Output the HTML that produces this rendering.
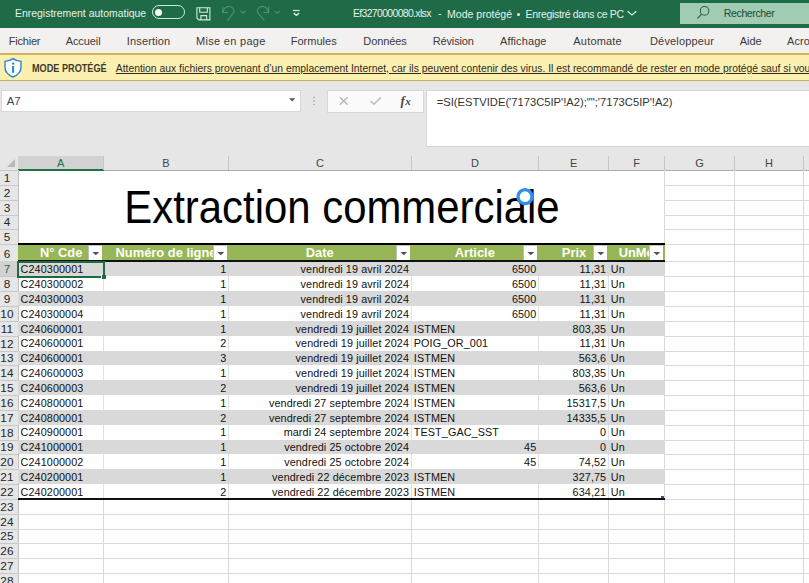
<!DOCTYPE html>
<html><head><meta charset="utf-8"><style>
html,body{margin:0;padding:0;width:809px;height:583px;overflow:hidden;background:#fff;}
.r{position:absolute;}
.t{position:absolute;white-space:nowrap;line-height:1;font-family:"Liberation Sans", sans-serif;}
</style></head><body>
<div class="r" style="left:0px;top:0px;width:809px;height:27.6px;background:#1f6a47;"></div>
<div class="t" style="left:15px;top:8.75px;font-size:10.45px;color:#e4f2ea;">Enregistrement automatique</div>
<div class="r" style="left:152px;top:5px;width:33.2px;height:14.2px;border:1.4px solid #c9ecd8;border-radius:8px;box-sizing:border-box;"></div>
<div class="r" style="left:155.3px;top:8.5px;width:7.2px;height:7.2px;background:#f4fbf7;border-radius:50%;"></div>
<svg class="r" style="left:0;top:0" width="809" height="27" viewBox="0 0 809 27">
<g fill="none" stroke="#cdeedc" stroke-width="1.1">
<path d="M196.9 7.8H209.9V19.9H198.9L196.9 17.9Z"/>
<path d="M199.7 7.8V12.2H207.3V7.8"/>
<path d="M200.9 19.9V15.6H206.6V19.9"/>
</g>
<g fill="none" stroke="#4f9571" stroke-width="1.05">
<path d="M222.8 7.2V12.4H228"/>
<path d="M223.2 12A5.4 5.4 0 0 1 234.2 11.8L227.5 20.6"/>
<path d="M240.5 10.7l2.6 2.5 2.6-2.5"/>
<path d="M268.6 6.8V12.4H263.4"/>
<path d="M268.2 12A5.4 5.4 0 0 0 257.2 11.8L264.3 20.6"/>
<path d="M274.7 11.1l2.6 2.1 2.6-2.1"/>
</g>
<g fill="none" stroke="#d2f0df">
<path d="M292.9 10.5h6.7" stroke-width="1.2"/>
<path d="M293.7 13.2l2.7 2.1 2.7-2.1" stroke-width="1.5"/>
<path d="M627.6 11.3l4.3 3.6 4.4-3.6" stroke-width="1.25"/>
</g>
</svg>
<div class="t" style="left:353px;top:8.75px;font-size:10.45px;color:#e4f2ea;letter-spacing:-0.65px;">Ef3270000080.xlsx</div>
<div class="t" style="left:438px;top:8.75px;font-size:10.45px;color:#e4f2ea;">-</div>
<div class="t" style="left:447px;top:8.67px;font-size:10.55px;color:#e4f2ea;">Mode protégé</div>
<div class="r" style="left:517px;top:12.5px;width:3px;height:3px;background:#e4f2ea;border-radius:50%"></div>
<div class="t" style="left:525.6px;top:8.71px;font-size:10.5px;color:#e4f2ea;letter-spacing:-0.33px;">Enregistré dans ce PC</div>
<div class="r" style="left:679.5px;top:2.5px;width:130px;height:21px;background:#a0ccb3;"></div>
<svg class="r" style="left:690px;top:0" width="30" height="27" viewBox="690 0 30 27">
<circle cx="704.6" cy="10.9" r="4.3" fill="none" stroke="#2c5a42" stroke-width="1.05"/>
<path d="M701.6 14.2L697.5 18.4" stroke="#2c5a42" stroke-width="1.15"/>
</svg>
<div class="t" style="left:723.8px;top:7.63px;font-size:10.6px;color:#1f4a33;letter-spacing:-0.42px;">Rechercher</div>
<div class="r" style="left:0px;top:27.6px;width:809px;height:26px;background:#f3f1f0;"></div>
<div class="t" style="left:8.8px;top:36.29px;font-size:11px;color:#3b3a39;letter-spacing:-0.22px;">Fichier</div>
<div class="t" style="left:65.7px;top:36.29px;font-size:11px;color:#3b3a39;letter-spacing:-0.08px;">Accueil</div>
<div class="t" style="left:126.8px;top:36.29px;font-size:11px;color:#3b3a39;letter-spacing:0.14px;">Insertion</div>
<div class="t" style="left:196px;top:36.29px;font-size:11px;color:#3b3a39;letter-spacing:0.3px;">Mise en page</div>
<div class="t" style="left:290.7px;top:36.29px;font-size:11px;color:#3b3a39;letter-spacing:0.02px;">Formules</div>
<div class="t" style="left:363.3px;top:36.29px;font-size:11px;color:#3b3a39;letter-spacing:-0.1px;">Données</div>
<div class="t" style="left:432.7px;top:36.29px;font-size:11px;color:#3b3a39;letter-spacing:-0.13px;">Révision</div>
<div class="t" style="left:500px;top:36.29px;font-size:11px;color:#3b3a39;letter-spacing:0.1px;">Affichage</div>
<div class="t" style="left:573.3px;top:36.29px;font-size:11px;color:#3b3a39;letter-spacing:0.19px;">Automate</div>
<div class="t" style="left:650px;top:36.29px;font-size:11px;color:#3b3a39;letter-spacing:0.16px;">Développeur</div>
<div class="t" style="left:739.7px;top:36.29px;font-size:11px;color:#3b3a39;letter-spacing:0px;">Aide</div>
<div class="t" style="left:787px;top:36.29px;font-size:11px;color:#3b3a39;letter-spacing:0.1px;">Acrobat</div>
<div class="r" style="left:0px;top:53.3px;width:809px;height:27.9px;background:#fcf0b1;border-top:2.2px solid #d3b655;border-bottom:1.6px solid #c8af5e;box-sizing:border-box;"></div>
<svg class="r" style="left:0;top:50px" width="30" height="32" viewBox="0 50 30 32">
<path d="M13 58.6 C10.8 60.3 8 61.2 5 61.4 V67.5 C5 72 8.2 75 13 77 C17.8 75 21 72 21 67.5 V61.4 C18 61.2 15.2 60.3 13 58.6 Z" fill="#fff" stroke="#2a86d6" stroke-width="1.4"/>
<circle cx="13.1" cy="63.6" r="1.2" fill="#1f86d8"/>
<rect x="12.1" y="66" width="2" height="6.7" fill="#1f86d8"/>
</svg>
<div class="t" style="left:31.7px;top:63.44px;font-size:10.7px;color:#3d3a2a;font-weight:bold;transform:scaleX(0.855);transform-origin:0 0;">MODE PROTÉGÉ</div>
<div class="t" style="left:115.8px;top:63.64px;font-size:10.35px;color:#2f2b1e;text-decoration:underline;white-space:nowrap;">Attention aux fichiers provenant d’un emplacement Internet, car ils peuvent contenir des virus. Il est recommandé de rester en mode protégé sauf si vous</div>
<div class="r" style="left:0px;top:81px;width:809px;height:75px;background:#e6e6e6;"></div>
<div class="r" style="left:1px;top:90px;width:300px;height:22px;background:#fff;border:1px solid #d8d8d8;box-sizing:border-box;"></div>
<div class="t" style="left:6.7px;top:95.75px;font-size:11.4px;color:#454545;">A7</div>
<svg class="r" style="left:280px;top:85px" width="150" height="30" viewBox="280 85 150 30">
<path d="M289 98.3h6.4l-3.2 3.2z" fill="#5a5a5a"/>
<circle cx="314" cy="97.5" r="0.8" fill="#9a9a9a"/><circle cx="314" cy="101" r="0.8" fill="#9a9a9a"/><circle cx="314" cy="104.5" r="0.8" fill="#9a9a9a"/>
</svg>
<div class="r" style="left:327px;top:89.5px;width:96.5px;height:23px;background:#fbfbfb;border:1px solid #d6d6d6;box-sizing:border-box;"></div>
<svg class="r" style="left:320px;top:85px" width="110" height="30" viewBox="320 85 110 30">
<path d="M339.8 97.3l7.8 7.4M347.6 97.3l-7.8 7.4" stroke="#b4b4b4" stroke-width="1.25" fill="none"/>
<path d="M370.4 101.1l3.7 3.1 6.7-6.8" stroke="#c2c2c2" stroke-width="1.7" fill="none"/>
</svg>
<div class="t" style="left:400.5px;top:94px;font-family:'Liberation Serif',serif;font-style:italic;font-weight:bold;color:#4a4a4a;font-size:13px;line-height:1">f<span style="font-size:11px;margin-left:0.5px">x</span></div>
<div class="r" style="left:426px;top:90px;width:385px;height:57px;background:#fff;border:1px solid #d6d6d6;box-sizing:border-box;"></div>
<div class="t" style="left:436.7px;top:96.52px;font-size:11.2px;color:#333;">=SI(ESTVIDE('7173C5IP'!A2);"";'7173C5IP'!A2)</div>
<div class="r" style="left:0px;top:156px;width:809px;height:14.5px;background:#e6e6e6;"></div>
<div class="r" style="left:18px;top:156px;width:86px;height:14.5px;background:#d2d2d2;"></div>
<div class="r" style="left:0px;top:169.5px;width:809px;height:1px;background:#ababab;"></div>
<div class="r" style="left:18px;top:168.5px;width:86px;height:2px;background:#217346;"></div>
<svg class="r" style="left:0;top:155px" width="18" height="16" viewBox="0 155 18 16"><path d="M15 159v8h-8z" fill="#b9b9b9"/></svg>
<div class="t" style="left:-139.25px;width:400px;text-align:center;top:157.99px;font-size:11px;color:#217346;">A</div>
<div class="r" style="left:103.0px;top:156px;width:1px;height:14px;background:#c6c6c6;"></div>
<div class="t" style="left:-34.0px;width:400px;text-align:center;top:157.99px;font-size:11px;color:#444;">B</div>
<div class="r" style="left:228.0px;top:156px;width:1px;height:14px;background:#c6c6c6;"></div>
<div class="t" style="left:119.94999999999999px;width:400px;text-align:center;top:157.99px;font-size:11px;color:#444;">C</div>
<div class="r" style="left:410.9px;top:156px;width:1px;height:14px;background:#c6c6c6;"></div>
<div class="t" style="left:274.95px;width:400px;text-align:center;top:157.99px;font-size:11px;color:#444;">D</div>
<div class="r" style="left:538.0px;top:156px;width:1px;height:14px;background:#c6c6c6;"></div>
<div class="t" style="left:373.54999999999995px;width:400px;text-align:center;top:157.99px;font-size:11px;color:#444;">E</div>
<div class="r" style="left:608.1px;top:156px;width:1px;height:14px;background:#c6c6c6;"></div>
<div class="t" style="left:436.54999999999995px;width:400px;text-align:center;top:157.99px;font-size:11px;color:#444;">F</div>
<div class="r" style="left:664.0px;top:156px;width:1px;height:14px;background:#c6c6c6;"></div>
<div class="t" style="left:499.5px;width:400px;text-align:center;top:157.99px;font-size:11px;color:#444;">G</div>
<div class="r" style="left:734.0px;top:156px;width:1px;height:14px;background:#c6c6c6;"></div>
<div class="t" style="left:569.05px;width:400px;text-align:center;top:157.99px;font-size:11px;color:#444;">H</div>
<div class="r" style="left:803.1px;top:156px;width:1px;height:14px;background:#c6c6c6;"></div>
<div class="t" style="left:641.8px;width:400px;text-align:center;top:157.99px;font-size:11px;color:#444;">I</div>
<div class="r" style="left:0px;top:170px;width:18px;height:413px;background:#e6e6e6;"></div>
<div class="r" style="left:17.5px;top:170px;width:1px;height:413px;background:#c0c0c0;"></div>
<div class="r" style="left:18.5px;top:170.5px;width:791px;height:413px;background:#fff;"></div>
<div class="r" style="left:0px;top:169.5px;width:18px;height:1px;background:#c8c8c8;"></div>
<div class="r" style="left:664.5px;top:184.5px;width:144.5px;height:1px;background:#dadada;"></div>
<div class="r" style="left:0px;top:184.5px;width:18px;height:1px;background:#c8c8c8;"></div>
<div class="r" style="left:664.5px;top:199.5px;width:144.5px;height:1px;background:#dadada;"></div>
<div class="r" style="left:0px;top:199.5px;width:18px;height:1px;background:#c8c8c8;"></div>
<div class="r" style="left:664.5px;top:214.5px;width:144.5px;height:1px;background:#dadada;"></div>
<div class="r" style="left:0px;top:214.5px;width:18px;height:1px;background:#c8c8c8;"></div>
<div class="r" style="left:664.5px;top:228.5px;width:144.5px;height:1px;background:#dadada;"></div>
<div class="r" style="left:0px;top:228.5px;width:18px;height:1px;background:#c8c8c8;"></div>
<div class="r" style="left:664.5px;top:243.5px;width:144.5px;height:1px;background:#dadada;"></div>
<div class="r" style="left:0px;top:243.5px;width:18px;height:1px;background:#c8c8c8;"></div>
<div class="r" style="left:664.5px;top:260.5px;width:144.5px;height:1px;background:#dadada;"></div>
<div class="r" style="left:0px;top:260.5px;width:18px;height:1px;background:#c8c8c8;"></div>
<div class="r" style="left:664.5px;top:275.5px;width:144.5px;height:1px;background:#dadada;"></div>
<div class="r" style="left:0px;top:275.5px;width:18px;height:1px;background:#c8c8c8;"></div>
<div class="r" style="left:664.5px;top:290.5px;width:144.5px;height:1px;background:#dadada;"></div>
<div class="r" style="left:0px;top:290.5px;width:18px;height:1px;background:#c8c8c8;"></div>
<div class="r" style="left:664.5px;top:305.5px;width:144.5px;height:1px;background:#dadada;"></div>
<div class="r" style="left:0px;top:305.5px;width:18px;height:1px;background:#c8c8c8;"></div>
<div class="r" style="left:664.5px;top:320.5px;width:144.5px;height:1px;background:#dadada;"></div>
<div class="r" style="left:0px;top:320.5px;width:18px;height:1px;background:#c8c8c8;"></div>
<div class="r" style="left:664.5px;top:335.5px;width:144.5px;height:1px;background:#dadada;"></div>
<div class="r" style="left:0px;top:335.5px;width:18px;height:1px;background:#c8c8c8;"></div>
<div class="r" style="left:664.5px;top:350.5px;width:144.5px;height:1px;background:#dadada;"></div>
<div class="r" style="left:0px;top:350.5px;width:18px;height:1px;background:#c8c8c8;"></div>
<div class="r" style="left:664.5px;top:364.5px;width:144.5px;height:1px;background:#dadada;"></div>
<div class="r" style="left:0px;top:364.5px;width:18px;height:1px;background:#c8c8c8;"></div>
<div class="r" style="left:664.5px;top:379.5px;width:144.5px;height:1px;background:#dadada;"></div>
<div class="r" style="left:0px;top:379.5px;width:18px;height:1px;background:#c8c8c8;"></div>
<div class="r" style="left:664.5px;top:394.5px;width:144.5px;height:1px;background:#dadada;"></div>
<div class="r" style="left:0px;top:394.5px;width:18px;height:1px;background:#c8c8c8;"></div>
<div class="r" style="left:664.5px;top:409.5px;width:144.5px;height:1px;background:#dadada;"></div>
<div class="r" style="left:0px;top:409.5px;width:18px;height:1px;background:#c8c8c8;"></div>
<div class="r" style="left:664.5px;top:424.5px;width:144.5px;height:1px;background:#dadada;"></div>
<div class="r" style="left:0px;top:424.5px;width:18px;height:1px;background:#c8c8c8;"></div>
<div class="r" style="left:664.5px;top:439.5px;width:144.5px;height:1px;background:#dadada;"></div>
<div class="r" style="left:0px;top:439.5px;width:18px;height:1px;background:#c8c8c8;"></div>
<div class="r" style="left:664.5px;top:453.5px;width:144.5px;height:1px;background:#dadada;"></div>
<div class="r" style="left:0px;top:453.5px;width:18px;height:1px;background:#c8c8c8;"></div>
<div class="r" style="left:664.5px;top:468.5px;width:144.5px;height:1px;background:#dadada;"></div>
<div class="r" style="left:0px;top:468.5px;width:18px;height:1px;background:#c8c8c8;"></div>
<div class="r" style="left:664.5px;top:483.5px;width:144.5px;height:1px;background:#dadada;"></div>
<div class="r" style="left:0px;top:483.5px;width:18px;height:1px;background:#c8c8c8;"></div>
<div class="r" style="left:664.5px;top:498.5px;width:144.5px;height:1px;background:#dadada;"></div>
<div class="r" style="left:0px;top:498.5px;width:18px;height:1px;background:#c8c8c8;"></div>
<div class="r" style="left:18px;top:513.5px;width:791px;height:1px;background:#dadada;"></div>
<div class="r" style="left:0px;top:513.5px;width:18px;height:1px;background:#c8c8c8;"></div>
<div class="r" style="left:18px;top:528.5px;width:791px;height:1px;background:#dadada;"></div>
<div class="r" style="left:0px;top:528.5px;width:18px;height:1px;background:#c8c8c8;"></div>
<div class="r" style="left:18px;top:542.5px;width:791px;height:1px;background:#dadada;"></div>
<div class="r" style="left:0px;top:542.5px;width:18px;height:1px;background:#c8c8c8;"></div>
<div class="r" style="left:18px;top:557.5px;width:791px;height:1px;background:#dadada;"></div>
<div class="r" style="left:0px;top:557.5px;width:18px;height:1px;background:#c8c8c8;"></div>
<div class="r" style="left:18px;top:572.5px;width:791px;height:1px;background:#dadada;"></div>
<div class="r" style="left:0px;top:572.5px;width:18px;height:1px;background:#c8c8c8;"></div>
<div class="r" style="left:18px;top:587.5px;width:791px;height:1px;background:#dadada;"></div>
<div class="r" style="left:0px;top:587.5px;width:18px;height:1px;background:#c8c8c8;"></div>
<div class="r" style="left:18px;top:602.5px;width:791px;height:1px;background:#dadada;"></div>
<div class="r" style="left:664.0px;top:170px;width:1px;height:413px;background:#dadada;"></div>
<div class="r" style="left:734.0px;top:170px;width:1px;height:413px;background:#dadada;"></div>
<div class="r" style="left:803.1px;top:170px;width:1px;height:413px;background:#dadada;"></div>
<div class="r" style="left:103.0px;top:498px;width:1px;height:90px;background:#dadada;"></div>
<div class="r" style="left:228.0px;top:498px;width:1px;height:90px;background:#dadada;"></div>
<div class="r" style="left:410.9px;top:498px;width:1px;height:90px;background:#dadada;"></div>
<div class="r" style="left:538.0px;top:498px;width:1px;height:90px;background:#dadada;"></div>
<div class="r" style="left:608.1px;top:498px;width:1px;height:90px;background:#dadada;"></div>
<div class="t" style="left:-193.1px;width:400px;text-align:center;top:172.87px;font-size:11.8px;color:#262626;">1</div>
<div class="t" style="left:-193.1px;width:400px;text-align:center;top:187.73px;font-size:11.8px;color:#262626;">2</div>
<div class="t" style="left:-193.1px;width:400px;text-align:center;top:202.59px;font-size:11.8px;color:#262626;">3</div>
<div class="t" style="left:-193.1px;width:400px;text-align:center;top:217.45px;font-size:11.8px;color:#262626;">4</div>
<div class="t" style="left:-193.1px;width:400px;text-align:center;top:232.31px;font-size:11.8px;color:#262626;">5</div>
<div class="t" style="left:-193.1px;width:400px;text-align:center;top:249.31px;font-size:11.8px;color:#262626;">6</div>
<div class="r" style="left:0px;top:261px;width:17.5px;height:15px;background:#d2d2d2;"></div>
<div class="t" style="left:-193.1px;width:400px;text-align:center;top:264.41px;font-size:11.8px;color:#217346;">7</div>
<div class="t" style="left:-193.1px;width:400px;text-align:center;top:279.24px;font-size:11.8px;color:#262626;">8</div>
<div class="t" style="left:-193.1px;width:400px;text-align:center;top:294.07px;font-size:11.8px;color:#262626;">9</div>
<div class="t" style="left:-193.1px;width:400px;text-align:center;top:308.90px;font-size:11.8px;color:#262626;">10</div>
<div class="t" style="left:-193.1px;width:400px;text-align:center;top:323.73px;font-size:11.8px;color:#262626;">11</div>
<div class="t" style="left:-193.1px;width:400px;text-align:center;top:338.56px;font-size:11.8px;color:#262626;">12</div>
<div class="t" style="left:-193.1px;width:400px;text-align:center;top:353.39px;font-size:11.8px;color:#262626;">13</div>
<div class="t" style="left:-193.1px;width:400px;text-align:center;top:368.22px;font-size:11.8px;color:#262626;">14</div>
<div class="t" style="left:-193.1px;width:400px;text-align:center;top:383.05px;font-size:11.8px;color:#262626;">15</div>
<div class="t" style="left:-193.1px;width:400px;text-align:center;top:397.88px;font-size:11.8px;color:#262626;">16</div>
<div class="t" style="left:-193.1px;width:400px;text-align:center;top:412.71px;font-size:11.8px;color:#262626;">17</div>
<div class="t" style="left:-193.1px;width:400px;text-align:center;top:427.54px;font-size:11.8px;color:#262626;">18</div>
<div class="t" style="left:-193.1px;width:400px;text-align:center;top:442.37px;font-size:11.8px;color:#262626;">19</div>
<div class="t" style="left:-193.1px;width:400px;text-align:center;top:457.20px;font-size:11.8px;color:#262626;">20</div>
<div class="t" style="left:-193.1px;width:400px;text-align:center;top:472.03px;font-size:11.8px;color:#262626;">21</div>
<div class="t" style="left:-193.1px;width:400px;text-align:center;top:486.86px;font-size:11.8px;color:#262626;">22</div>
<div class="t" style="left:-193.1px;width:400px;text-align:center;top:501.69px;font-size:11.8px;color:#262626;">23</div>
<div class="t" style="left:-193.1px;width:400px;text-align:center;top:516.52px;font-size:11.8px;color:#262626;">24</div>
<div class="t" style="left:-193.1px;width:400px;text-align:center;top:531.35px;font-size:11.8px;color:#262626;">25</div>
<div class="t" style="left:-193.1px;width:400px;text-align:center;top:546.18px;font-size:11.8px;color:#262626;">26</div>
<div class="t" style="left:-193.1px;width:400px;text-align:center;top:561.01px;font-size:11.8px;color:#262626;">27</div>
<div class="t" style="left:-193.1px;width:400px;text-align:center;top:575.84px;font-size:11.8px;color:#262626;">28</div>
<div class="t" style="left:142px;width:400px;text-align:center;top:188.33px;font-size:41.9px;color:#000;transform:scaleY(1.1);transform-origin:0 35.47px;width:800px;left:-58px;">Extraction commerciale</div>
<div class="r" style="left:18px;top:243px;width:647px;height:2px;background:#000;"></div>
<div class="r" style="left:18px;top:245px;width:647px;height:16px;background:#97b657;"></div>
<div class="r" style="left:18px;top:245px;width:69.6px;height:16px;overflow:hidden">
<div class="t" style="left:-56.9px;width:200px;text-align:center;top:2.48px;font-size:12.9px;font-weight:bold;color:#fdfdf5;transform:scaleY(1.06);transform-origin:0 10.9px">N° Cde</div>
</div>
<div class="r" style="left:103.5px;top:245px;width:109.1px;height:16px;overflow:hidden">
<div class="t" style="left:-37.5px;width:200px;text-align:center;top:2.48px;font-size:12.9px;font-weight:bold;color:#fdfdf5;transform:scaleY(1.06);transform-origin:0 10.9px">Numéro de ligne</div>
</div>
<div class="r" style="left:228.5px;top:245px;width:167.0px;height:16px;overflow:hidden">
<div class="t" style="left:-8.800000000000011px;width:200px;text-align:center;top:2.48px;font-size:12.9px;font-weight:bold;color:#fdfdf5;transform:scaleY(1.06);transform-origin:0 10.9px">Date</div>
</div>
<div class="r" style="left:411.4px;top:245px;width:111.20000000000005px;height:16px;overflow:hidden">
<div class="t" style="left:-36.599999999999966px;width:200px;text-align:center;top:2.48px;font-size:12.9px;font-weight:bold;color:#fdfdf5;transform:scaleY(1.06);transform-origin:0 10.9px">Article</div>
</div>
<div class="r" style="left:538.5px;top:245px;width:54.200000000000045px;height:16px;overflow:hidden">
<div class="t" style="left:-64.5px;width:200px;text-align:center;top:2.48px;font-size:12.9px;font-weight:bold;color:#fdfdf5;transform:scaleY(1.06);transform-origin:0 10.9px">Prix</div>
</div>
<div class="r" style="left:608.6px;top:245px;width:40.0px;height:16px;overflow:hidden">
<div class="t" style="left:10.100000000000023px;top:2.48px;font-size:12.9px;font-weight:bold;color:#fff;transform:scaleY(1.06);transform-origin:0 10.9px">UnMesure</div>
</div>
<div class="r" style="left:87.6px;top:245px;width:14.4px;height:15.1px;background:#fff;border-left:1px solid #b9bec3;border-top:1.6px solid #bfc4ca;box-sizing:border-box;"></div>
<svg class="r" style="left:87.6px;top:245px" width="15" height="15" viewBox="0 0 15 15"><path d="M4.4 7h6.8l-3.4 3.3z" fill="#505050"/></svg>
<div class="r" style="left:212.6px;top:245px;width:14.4px;height:15.1px;background:#fff;border-left:1px solid #b9bec3;border-top:1.6px solid #bfc4ca;box-sizing:border-box;"></div>
<svg class="r" style="left:212.6px;top:245px" width="15" height="15" viewBox="0 0 15 15"><path d="M4.4 7h6.8l-3.4 3.3z" fill="#505050"/></svg>
<div class="r" style="left:395.5px;top:245px;width:14.4px;height:15.1px;background:#fff;border-left:1px solid #b9bec3;border-top:1.6px solid #bfc4ca;box-sizing:border-box;"></div>
<svg class="r" style="left:395.5px;top:245px" width="15" height="15" viewBox="0 0 15 15"><path d="M4.4 7h6.8l-3.4 3.3z" fill="#505050"/></svg>
<div class="r" style="left:522.6px;top:245px;width:14.4px;height:15.1px;background:#fff;border-left:1px solid #b9bec3;border-top:1.6px solid #bfc4ca;box-sizing:border-box;"></div>
<svg class="r" style="left:522.6px;top:245px" width="15" height="15" viewBox="0 0 15 15"><path d="M4.4 7h6.8l-3.4 3.3z" fill="#505050"/></svg>
<div class="r" style="left:592.7px;top:245px;width:14.4px;height:15.1px;background:#fff;border-left:1px solid #b9bec3;border-top:1.6px solid #bfc4ca;box-sizing:border-box;"></div>
<svg class="r" style="left:592.7px;top:245px" width="15" height="15" viewBox="0 0 15 15"><path d="M4.4 7h6.8l-3.4 3.3z" fill="#505050"/></svg>
<div class="r" style="left:648.6px;top:245px;width:14.4px;height:15.1px;background:#fff;border-left:1px solid #b9bec3;border-top:1.6px solid #bfc4ca;box-sizing:border-box;"></div>
<svg class="r" style="left:648.6px;top:245px" width="15" height="15" viewBox="0 0 15 15"><path d="M4.4 7h6.8l-3.4 3.3z" fill="#505050"/></svg>
<div class="r" style="left:18px;top:261px;width:646.5px;height:15px;background:#d9d9d9;"></div>
<div class="t" style="left:20.6px;top:264.26px;font-size:10.8px;color:#111;letter-spacing:0.1px;transform:scaleY(1.07);transform-origin:0 9.14px;">C240300001</div>
<div class="t" style="right:582.7px;top:264.26px;font-size:10.8px;color:#111;letter-spacing:0.1px;transform:scaleY(1.07);transform-origin:0 9.14px;">1</div>
<div class="t" style="right:400.0px;top:264.26px;font-size:10.8px;color:#111;letter-spacing:0.1px;transform:scaleY(1.07);transform-origin:0 9.14px;">vendredi 19 avril 2024</div>
<div class="t" style="right:272.70000000000005px;top:264.26px;font-size:10.8px;color:#111;letter-spacing:0.1px;transform:scaleY(1.07);transform-origin:0 9.14px;">6500</div>
<div class="t" style="right:202.79999999999995px;top:264.26px;font-size:10.8px;color:#111;letter-spacing:0.1px;transform:scaleY(1.07);transform-origin:0 9.14px;">11,31</div>
<div class="t" style="left:610.8000000000001px;top:264.26px;font-size:10.8px;color:#111;letter-spacing:0.1px;transform:scaleY(1.07);transform-origin:0 9.14px;">Un</div>
<div class="r" style="left:18px;top:290.5px;width:646.5px;height:1px;background:#ececec;"></div>
<div class="r" style="left:103.0px;top:276px;width:1px;height:15px;background:#e2e2e2;"></div>
<div class="r" style="left:228.0px;top:276px;width:1px;height:15px;background:#e2e2e2;"></div>
<div class="r" style="left:410.9px;top:276px;width:1px;height:15px;background:#e2e2e2;"></div>
<div class="r" style="left:538.0px;top:276px;width:1px;height:15px;background:#e2e2e2;"></div>
<div class="r" style="left:608.1px;top:276px;width:1px;height:15px;background:#e2e2e2;"></div>
<div class="t" style="left:20.6px;top:279.09px;font-size:10.8px;color:#111;letter-spacing:0.1px;transform:scaleY(1.07);transform-origin:0 9.14px;">C240300002</div>
<div class="t" style="right:582.7px;top:279.09px;font-size:10.8px;color:#111;letter-spacing:0.1px;transform:scaleY(1.07);transform-origin:0 9.14px;">1</div>
<div class="t" style="right:400.0px;top:279.09px;font-size:10.8px;color:#111;letter-spacing:0.1px;transform:scaleY(1.07);transform-origin:0 9.14px;">vendredi 19 avril 2024</div>
<div class="t" style="right:272.70000000000005px;top:279.09px;font-size:10.8px;color:#111;letter-spacing:0.1px;transform:scaleY(1.07);transform-origin:0 9.14px;">6500</div>
<div class="t" style="right:202.79999999999995px;top:279.09px;font-size:10.8px;color:#111;letter-spacing:0.1px;transform:scaleY(1.07);transform-origin:0 9.14px;">11,31</div>
<div class="t" style="left:610.8000000000001px;top:279.09px;font-size:10.8px;color:#111;letter-spacing:0.1px;transform:scaleY(1.07);transform-origin:0 9.14px;">Un</div>
<div class="r" style="left:18px;top:291px;width:646.5px;height:15px;background:#d9d9d9;"></div>
<div class="t" style="left:20.6px;top:293.92px;font-size:10.8px;color:#111;letter-spacing:0.1px;transform:scaleY(1.07);transform-origin:0 9.14px;">C240300003</div>
<div class="t" style="right:582.7px;top:293.92px;font-size:10.8px;color:#111;letter-spacing:0.1px;transform:scaleY(1.07);transform-origin:0 9.14px;">1</div>
<div class="t" style="right:400.0px;top:293.92px;font-size:10.8px;color:#111;letter-spacing:0.1px;transform:scaleY(1.07);transform-origin:0 9.14px;">vendredi 19 avril 2024</div>
<div class="t" style="right:272.70000000000005px;top:293.92px;font-size:10.8px;color:#111;letter-spacing:0.1px;transform:scaleY(1.07);transform-origin:0 9.14px;">6500</div>
<div class="t" style="right:202.79999999999995px;top:293.92px;font-size:10.8px;color:#111;letter-spacing:0.1px;transform:scaleY(1.07);transform-origin:0 9.14px;">11,31</div>
<div class="t" style="left:610.8000000000001px;top:293.92px;font-size:10.8px;color:#111;letter-spacing:0.1px;transform:scaleY(1.07);transform-origin:0 9.14px;">Un</div>
<div class="r" style="left:18px;top:320.5px;width:646.5px;height:1px;background:#ececec;"></div>
<div class="r" style="left:103.0px;top:306px;width:1px;height:15px;background:#e2e2e2;"></div>
<div class="r" style="left:228.0px;top:306px;width:1px;height:15px;background:#e2e2e2;"></div>
<div class="r" style="left:410.9px;top:306px;width:1px;height:15px;background:#e2e2e2;"></div>
<div class="r" style="left:538.0px;top:306px;width:1px;height:15px;background:#e2e2e2;"></div>
<div class="r" style="left:608.1px;top:306px;width:1px;height:15px;background:#e2e2e2;"></div>
<div class="t" style="left:20.6px;top:308.75px;font-size:10.8px;color:#111;letter-spacing:0.1px;transform:scaleY(1.07);transform-origin:0 9.14px;">C240300004</div>
<div class="t" style="right:582.7px;top:308.75px;font-size:10.8px;color:#111;letter-spacing:0.1px;transform:scaleY(1.07);transform-origin:0 9.14px;">1</div>
<div class="t" style="right:400.0px;top:308.75px;font-size:10.8px;color:#111;letter-spacing:0.1px;transform:scaleY(1.07);transform-origin:0 9.14px;">vendredi 19 avril 2024</div>
<div class="t" style="right:272.70000000000005px;top:308.75px;font-size:10.8px;color:#111;letter-spacing:0.1px;transform:scaleY(1.07);transform-origin:0 9.14px;">6500</div>
<div class="t" style="right:202.79999999999995px;top:308.75px;font-size:10.8px;color:#111;letter-spacing:0.1px;transform:scaleY(1.07);transform-origin:0 9.14px;">11,31</div>
<div class="t" style="left:610.8000000000001px;top:308.75px;font-size:10.8px;color:#111;letter-spacing:0.1px;transform:scaleY(1.07);transform-origin:0 9.14px;">Un</div>
<div class="r" style="left:18px;top:321px;width:646.5px;height:15px;background:#d9d9d9;"></div>
<div class="t" style="left:20.6px;top:323.58px;font-size:10.8px;color:#111;letter-spacing:0.1px;transform:scaleY(1.07);transform-origin:0 9.14px;">C240600001</div>
<div class="t" style="right:582.7px;top:323.58px;font-size:10.8px;color:#111;letter-spacing:0.1px;transform:scaleY(1.07);transform-origin:0 9.14px;">1</div>
<div class="t" style="right:400.0px;top:323.58px;font-size:10.8px;color:#111;letter-spacing:0.1px;transform:scaleY(1.07);transform-origin:0 9.14px;">vendredi 19 juillet 2024</div>
<div class="t" style="left:413.79999999999995px;top:323.58px;font-size:10.8px;color:#111;letter-spacing:0.1px;transform:scaleY(1.07);transform-origin:0 9.14px;">ISTMEN</div>
<div class="t" style="right:202.79999999999995px;top:323.58px;font-size:10.8px;color:#111;letter-spacing:0.1px;transform:scaleY(1.07);transform-origin:0 9.14px;">803,35</div>
<div class="t" style="left:610.8000000000001px;top:323.58px;font-size:10.8px;color:#111;letter-spacing:0.1px;transform:scaleY(1.07);transform-origin:0 9.14px;">Un</div>
<div class="r" style="left:18px;top:350.5px;width:646.5px;height:1px;background:#ececec;"></div>
<div class="r" style="left:103.0px;top:336px;width:1px;height:15px;background:#e2e2e2;"></div>
<div class="r" style="left:228.0px;top:336px;width:1px;height:15px;background:#e2e2e2;"></div>
<div class="r" style="left:410.9px;top:336px;width:1px;height:15px;background:#e2e2e2;"></div>
<div class="r" style="left:538.0px;top:336px;width:1px;height:15px;background:#e2e2e2;"></div>
<div class="r" style="left:608.1px;top:336px;width:1px;height:15px;background:#e2e2e2;"></div>
<div class="t" style="left:20.6px;top:338.41px;font-size:10.8px;color:#111;letter-spacing:0.1px;transform:scaleY(1.07);transform-origin:0 9.14px;">C240600001</div>
<div class="t" style="right:582.7px;top:338.41px;font-size:10.8px;color:#111;letter-spacing:0.1px;transform:scaleY(1.07);transform-origin:0 9.14px;">2</div>
<div class="t" style="right:400.0px;top:338.41px;font-size:10.8px;color:#111;letter-spacing:0.1px;transform:scaleY(1.07);transform-origin:0 9.14px;">vendredi 19 juillet 2024</div>
<div class="t" style="left:413.79999999999995px;top:338.41px;font-size:10.8px;color:#111;letter-spacing:0.1px;transform:scaleY(1.07);transform-origin:0 9.14px;">POIG_OR_001</div>
<div class="t" style="right:202.79999999999995px;top:338.41px;font-size:10.8px;color:#111;letter-spacing:0.1px;transform:scaleY(1.07);transform-origin:0 9.14px;">11,31</div>
<div class="t" style="left:610.8000000000001px;top:338.41px;font-size:10.8px;color:#111;letter-spacing:0.1px;transform:scaleY(1.07);transform-origin:0 9.14px;">Un</div>
<div class="r" style="left:18px;top:351px;width:646.5px;height:14px;background:#d9d9d9;"></div>
<div class="t" style="left:20.6px;top:353.24px;font-size:10.8px;color:#111;letter-spacing:0.1px;transform:scaleY(1.07);transform-origin:0 9.14px;">C240600001</div>
<div class="t" style="right:582.7px;top:353.24px;font-size:10.8px;color:#111;letter-spacing:0.1px;transform:scaleY(1.07);transform-origin:0 9.14px;">3</div>
<div class="t" style="right:400.0px;top:353.24px;font-size:10.8px;color:#111;letter-spacing:0.1px;transform:scaleY(1.07);transform-origin:0 9.14px;">vendredi 19 juillet 2024</div>
<div class="t" style="left:413.79999999999995px;top:353.24px;font-size:10.8px;color:#111;letter-spacing:0.1px;transform:scaleY(1.07);transform-origin:0 9.14px;">ISTMEN</div>
<div class="t" style="right:202.79999999999995px;top:353.24px;font-size:10.8px;color:#111;letter-spacing:0.1px;transform:scaleY(1.07);transform-origin:0 9.14px;">563,6</div>
<div class="t" style="left:610.8000000000001px;top:353.24px;font-size:10.8px;color:#111;letter-spacing:0.1px;transform:scaleY(1.07);transform-origin:0 9.14px;">Un</div>
<div class="r" style="left:18px;top:379.5px;width:646.5px;height:1px;background:#ececec;"></div>
<div class="r" style="left:103.0px;top:365px;width:1px;height:15px;background:#e2e2e2;"></div>
<div class="r" style="left:228.0px;top:365px;width:1px;height:15px;background:#e2e2e2;"></div>
<div class="r" style="left:410.9px;top:365px;width:1px;height:15px;background:#e2e2e2;"></div>
<div class="r" style="left:538.0px;top:365px;width:1px;height:15px;background:#e2e2e2;"></div>
<div class="r" style="left:608.1px;top:365px;width:1px;height:15px;background:#e2e2e2;"></div>
<div class="t" style="left:20.6px;top:368.07px;font-size:10.8px;color:#111;letter-spacing:0.1px;transform:scaleY(1.07);transform-origin:0 9.14px;">C240600003</div>
<div class="t" style="right:582.7px;top:368.07px;font-size:10.8px;color:#111;letter-spacing:0.1px;transform:scaleY(1.07);transform-origin:0 9.14px;">1</div>
<div class="t" style="right:400.0px;top:368.07px;font-size:10.8px;color:#111;letter-spacing:0.1px;transform:scaleY(1.07);transform-origin:0 9.14px;">vendredi 19 juillet 2024</div>
<div class="t" style="left:413.79999999999995px;top:368.07px;font-size:10.8px;color:#111;letter-spacing:0.1px;transform:scaleY(1.07);transform-origin:0 9.14px;">ISTMEN</div>
<div class="t" style="right:202.79999999999995px;top:368.07px;font-size:10.8px;color:#111;letter-spacing:0.1px;transform:scaleY(1.07);transform-origin:0 9.14px;">803,35</div>
<div class="t" style="left:610.8000000000001px;top:368.07px;font-size:10.8px;color:#111;letter-spacing:0.1px;transform:scaleY(1.07);transform-origin:0 9.14px;">Un</div>
<div class="r" style="left:18px;top:380px;width:646.5px;height:15px;background:#d9d9d9;"></div>
<div class="t" style="left:20.6px;top:382.90px;font-size:10.8px;color:#111;letter-spacing:0.1px;transform:scaleY(1.07);transform-origin:0 9.14px;">C240600003</div>
<div class="t" style="right:582.7px;top:382.90px;font-size:10.8px;color:#111;letter-spacing:0.1px;transform:scaleY(1.07);transform-origin:0 9.14px;">2</div>
<div class="t" style="right:400.0px;top:382.90px;font-size:10.8px;color:#111;letter-spacing:0.1px;transform:scaleY(1.07);transform-origin:0 9.14px;">vendredi 19 juillet 2024</div>
<div class="t" style="left:413.79999999999995px;top:382.90px;font-size:10.8px;color:#111;letter-spacing:0.1px;transform:scaleY(1.07);transform-origin:0 9.14px;">ISTMEN</div>
<div class="t" style="right:202.79999999999995px;top:382.90px;font-size:10.8px;color:#111;letter-spacing:0.1px;transform:scaleY(1.07);transform-origin:0 9.14px;">563,6</div>
<div class="t" style="left:610.8000000000001px;top:382.90px;font-size:10.8px;color:#111;letter-spacing:0.1px;transform:scaleY(1.07);transform-origin:0 9.14px;">Un</div>
<div class="r" style="left:18px;top:409.5px;width:646.5px;height:1px;background:#ececec;"></div>
<div class="r" style="left:103.0px;top:395px;width:1px;height:15px;background:#e2e2e2;"></div>
<div class="r" style="left:228.0px;top:395px;width:1px;height:15px;background:#e2e2e2;"></div>
<div class="r" style="left:410.9px;top:395px;width:1px;height:15px;background:#e2e2e2;"></div>
<div class="r" style="left:538.0px;top:395px;width:1px;height:15px;background:#e2e2e2;"></div>
<div class="r" style="left:608.1px;top:395px;width:1px;height:15px;background:#e2e2e2;"></div>
<div class="t" style="left:20.6px;top:397.73px;font-size:10.8px;color:#111;letter-spacing:0.1px;transform:scaleY(1.07);transform-origin:0 9.14px;">C240800001</div>
<div class="t" style="right:582.7px;top:397.73px;font-size:10.8px;color:#111;letter-spacing:0.1px;transform:scaleY(1.07);transform-origin:0 9.14px;">1</div>
<div class="t" style="right:400.0px;top:397.73px;font-size:10.8px;color:#111;letter-spacing:0.1px;transform:scaleY(1.07);transform-origin:0 9.14px;">vendredi 27 septembre 2024</div>
<div class="t" style="left:413.79999999999995px;top:397.73px;font-size:10.8px;color:#111;letter-spacing:0.1px;transform:scaleY(1.07);transform-origin:0 9.14px;">ISTMEN</div>
<div class="t" style="right:202.79999999999995px;top:397.73px;font-size:10.8px;color:#111;letter-spacing:0.1px;transform:scaleY(1.07);transform-origin:0 9.14px;">15317,5</div>
<div class="t" style="left:610.8000000000001px;top:397.73px;font-size:10.8px;color:#111;letter-spacing:0.1px;transform:scaleY(1.07);transform-origin:0 9.14px;">Un</div>
<div class="r" style="left:18px;top:410px;width:646.5px;height:15px;background:#d9d9d9;"></div>
<div class="t" style="left:20.6px;top:412.56px;font-size:10.8px;color:#111;letter-spacing:0.1px;transform:scaleY(1.07);transform-origin:0 9.14px;">C240800001</div>
<div class="t" style="right:582.7px;top:412.56px;font-size:10.8px;color:#111;letter-spacing:0.1px;transform:scaleY(1.07);transform-origin:0 9.14px;">2</div>
<div class="t" style="right:400.0px;top:412.56px;font-size:10.8px;color:#111;letter-spacing:0.1px;transform:scaleY(1.07);transform-origin:0 9.14px;">vendredi 27 septembre 2024</div>
<div class="t" style="left:413.79999999999995px;top:412.56px;font-size:10.8px;color:#111;letter-spacing:0.1px;transform:scaleY(1.07);transform-origin:0 9.14px;">ISTMEN</div>
<div class="t" style="right:202.79999999999995px;top:412.56px;font-size:10.8px;color:#111;letter-spacing:0.1px;transform:scaleY(1.07);transform-origin:0 9.14px;">14335,5</div>
<div class="t" style="left:610.8000000000001px;top:412.56px;font-size:10.8px;color:#111;letter-spacing:0.1px;transform:scaleY(1.07);transform-origin:0 9.14px;">Un</div>
<div class="r" style="left:18px;top:439.5px;width:646.5px;height:1px;background:#ececec;"></div>
<div class="r" style="left:103.0px;top:425px;width:1px;height:15px;background:#e2e2e2;"></div>
<div class="r" style="left:228.0px;top:425px;width:1px;height:15px;background:#e2e2e2;"></div>
<div class="r" style="left:410.9px;top:425px;width:1px;height:15px;background:#e2e2e2;"></div>
<div class="r" style="left:538.0px;top:425px;width:1px;height:15px;background:#e2e2e2;"></div>
<div class="r" style="left:608.1px;top:425px;width:1px;height:15px;background:#e2e2e2;"></div>
<div class="t" style="left:20.6px;top:427.39px;font-size:10.8px;color:#111;letter-spacing:0.1px;transform:scaleY(1.07);transform-origin:0 9.14px;">C240900001</div>
<div class="t" style="right:582.7px;top:427.39px;font-size:10.8px;color:#111;letter-spacing:0.1px;transform:scaleY(1.07);transform-origin:0 9.14px;">1</div>
<div class="t" style="right:400.0px;top:427.39px;font-size:10.8px;color:#111;letter-spacing:0.1px;transform:scaleY(1.07);transform-origin:0 9.14px;">mardi 24 septembre 2024</div>
<div class="t" style="left:413.79999999999995px;top:427.39px;font-size:10.8px;color:#111;letter-spacing:0.1px;transform:scaleY(1.07);transform-origin:0 9.14px;">TEST_GAC_SST</div>
<div class="t" style="right:202.79999999999995px;top:427.39px;font-size:10.8px;color:#111;letter-spacing:0.1px;transform:scaleY(1.07);transform-origin:0 9.14px;">0</div>
<div class="t" style="left:610.8000000000001px;top:427.39px;font-size:10.8px;color:#111;letter-spacing:0.1px;transform:scaleY(1.07);transform-origin:0 9.14px;">Un</div>
<div class="r" style="left:18px;top:440px;width:646.5px;height:14px;background:#d9d9d9;"></div>
<div class="t" style="left:20.6px;top:442.22px;font-size:10.8px;color:#111;letter-spacing:0.1px;transform:scaleY(1.07);transform-origin:0 9.14px;">C241000001</div>
<div class="t" style="right:582.7px;top:442.22px;font-size:10.8px;color:#111;letter-spacing:0.1px;transform:scaleY(1.07);transform-origin:0 9.14px;">1</div>
<div class="t" style="right:400.0px;top:442.22px;font-size:10.8px;color:#111;letter-spacing:0.1px;transform:scaleY(1.07);transform-origin:0 9.14px;">vendredi 25 octobre 2024</div>
<div class="t" style="right:272.70000000000005px;top:442.22px;font-size:10.8px;color:#111;letter-spacing:0.1px;transform:scaleY(1.07);transform-origin:0 9.14px;">45</div>
<div class="t" style="right:202.79999999999995px;top:442.22px;font-size:10.8px;color:#111;letter-spacing:0.1px;transform:scaleY(1.07);transform-origin:0 9.14px;">0</div>
<div class="t" style="left:610.8000000000001px;top:442.22px;font-size:10.8px;color:#111;letter-spacing:0.1px;transform:scaleY(1.07);transform-origin:0 9.14px;">Un</div>
<div class="r" style="left:18px;top:468.5px;width:646.5px;height:1px;background:#ececec;"></div>
<div class="r" style="left:103.0px;top:454px;width:1px;height:15px;background:#e2e2e2;"></div>
<div class="r" style="left:228.0px;top:454px;width:1px;height:15px;background:#e2e2e2;"></div>
<div class="r" style="left:410.9px;top:454px;width:1px;height:15px;background:#e2e2e2;"></div>
<div class="r" style="left:538.0px;top:454px;width:1px;height:15px;background:#e2e2e2;"></div>
<div class="r" style="left:608.1px;top:454px;width:1px;height:15px;background:#e2e2e2;"></div>
<div class="t" style="left:20.6px;top:457.05px;font-size:10.8px;color:#111;letter-spacing:0.1px;transform:scaleY(1.07);transform-origin:0 9.14px;">C241000002</div>
<div class="t" style="right:582.7px;top:457.05px;font-size:10.8px;color:#111;letter-spacing:0.1px;transform:scaleY(1.07);transform-origin:0 9.14px;">1</div>
<div class="t" style="right:400.0px;top:457.05px;font-size:10.8px;color:#111;letter-spacing:0.1px;transform:scaleY(1.07);transform-origin:0 9.14px;">vendredi 25 octobre 2024</div>
<div class="t" style="right:272.70000000000005px;top:457.05px;font-size:10.8px;color:#111;letter-spacing:0.1px;transform:scaleY(1.07);transform-origin:0 9.14px;">45</div>
<div class="t" style="right:202.79999999999995px;top:457.05px;font-size:10.8px;color:#111;letter-spacing:0.1px;transform:scaleY(1.07);transform-origin:0 9.14px;">74,52</div>
<div class="t" style="left:610.8000000000001px;top:457.05px;font-size:10.8px;color:#111;letter-spacing:0.1px;transform:scaleY(1.07);transform-origin:0 9.14px;">Un</div>
<div class="r" style="left:18px;top:469px;width:646.5px;height:15px;background:#d9d9d9;"></div>
<div class="t" style="left:20.6px;top:471.88px;font-size:10.8px;color:#111;letter-spacing:0.1px;transform:scaleY(1.07);transform-origin:0 9.14px;">C240200001</div>
<div class="t" style="right:582.7px;top:471.88px;font-size:10.8px;color:#111;letter-spacing:0.1px;transform:scaleY(1.07);transform-origin:0 9.14px;">1</div>
<div class="t" style="right:400.0px;top:471.88px;font-size:10.8px;color:#111;letter-spacing:0.1px;transform:scaleY(1.07);transform-origin:0 9.14px;">vendredi 22 décembre 2023</div>
<div class="t" style="left:413.79999999999995px;top:471.88px;font-size:10.8px;color:#111;letter-spacing:0.1px;transform:scaleY(1.07);transform-origin:0 9.14px;">ISTMEN</div>
<div class="t" style="right:202.79999999999995px;top:471.88px;font-size:10.8px;color:#111;letter-spacing:0.1px;transform:scaleY(1.07);transform-origin:0 9.14px;">327,75</div>
<div class="t" style="left:610.8000000000001px;top:471.88px;font-size:10.8px;color:#111;letter-spacing:0.1px;transform:scaleY(1.07);transform-origin:0 9.14px;">Un</div>
<div class="r" style="left:18px;top:498.5px;width:646.5px;height:1px;background:#ececec;"></div>
<div class="r" style="left:103.0px;top:484px;width:1px;height:15px;background:#e2e2e2;"></div>
<div class="r" style="left:228.0px;top:484px;width:1px;height:15px;background:#e2e2e2;"></div>
<div class="r" style="left:410.9px;top:484px;width:1px;height:15px;background:#e2e2e2;"></div>
<div class="r" style="left:538.0px;top:484px;width:1px;height:15px;background:#e2e2e2;"></div>
<div class="r" style="left:608.1px;top:484px;width:1px;height:15px;background:#e2e2e2;"></div>
<div class="t" style="left:20.6px;top:486.71px;font-size:10.8px;color:#111;letter-spacing:0.1px;transform:scaleY(1.07);transform-origin:0 9.14px;">C240200001</div>
<div class="t" style="right:582.7px;top:486.71px;font-size:10.8px;color:#111;letter-spacing:0.1px;transform:scaleY(1.07);transform-origin:0 9.14px;">2</div>
<div class="t" style="right:400.0px;top:486.71px;font-size:10.8px;color:#111;letter-spacing:0.1px;transform:scaleY(1.07);transform-origin:0 9.14px;">vendredi 22 décembre 2023</div>
<div class="t" style="left:413.79999999999995px;top:486.71px;font-size:10.8px;color:#111;letter-spacing:0.1px;transform:scaleY(1.07);transform-origin:0 9.14px;">ISTMEN</div>
<div class="t" style="right:202.79999999999995px;top:486.71px;font-size:10.8px;color:#111;letter-spacing:0.1px;transform:scaleY(1.07);transform-origin:0 9.14px;">634,21</div>
<div class="t" style="left:610.8000000000001px;top:486.71px;font-size:10.8px;color:#111;letter-spacing:0.1px;transform:scaleY(1.07);transform-origin:0 9.14px;">Un</div>
<div class="r" style="left:18px;top:260.1px;width:647px;height:1.8px;background:#111;"></div>
<div class="r" style="left:18px;top:497.5px;width:646.5px;height:2px;background:#111;"></div>
<div class="r" style="left:17px;top:260.5px;width:88px;height:17px;border:2px solid #1d6b41;box-sizing:border-box;"></div>
<div class="r" style="left:101.5px;top:275px;width:4.5px;height:4px;background:#1d6b41;"></div>
<div class="r" style="left:100.5px;top:274px;width:1px;height:5px;background:#fff;"></div>
<div class="r" style="left:661px;top:496px;width:3px;height:2px;background:#3050b0;"></div>
<svg class="r" style="left:510px;top:182px" width="30" height="30" viewBox="510 182 30 30">
<circle cx="525" cy="196.7" r="7" fill="#fff" stroke="#2f8ef0" stroke-width="3.3"/>
</svg>
</body></html>
